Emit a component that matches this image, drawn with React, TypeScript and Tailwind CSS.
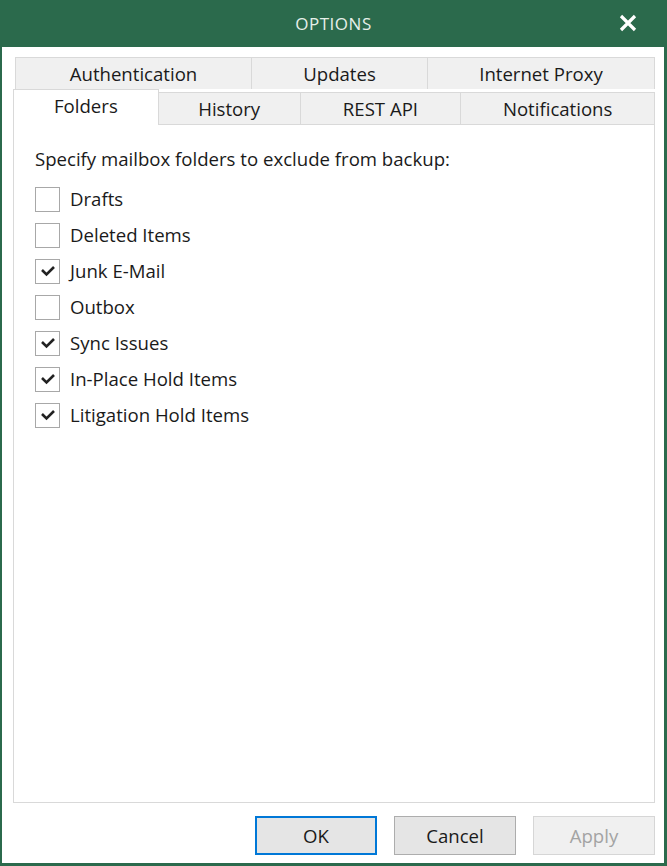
import React from "react";

const topTabs = [
  { label: "Authentication", w: "w-[237px]" },
  { label: "Updates", w: "w-[176px]" },
  { label: "Internet Proxy", w: "w-[227px]" },
];

const bottomTabs = [
  { label: "History", w: "w-[142px]" },
  { label: "REST API", w: "w-[161px]" },
  { label: "Notifications", w: "w-[194px]" },
];

const folders = [
  { label: "Drafts", checked: false },
  { label: "Deleted Items", checked: false },
  { label: "Junk E-Mail", checked: true },
  { label: "Outbox", checked: false },
  { label: "Sync Issues", checked: true },
  { label: "In-Place Hold Items", checked: true },
  { label: "Litigation Hold Items", checked: true },
];

function Check({ checked }: { checked: boolean }) {
  return (
    <div className="w-[25px] h-[25px] border border-[#a8a8a8] bg-white flex items-center justify-center">
      {checked && (
        <svg width="16" height="12" viewBox="0 0 16 12">
          <polyline points="2,5 6.5,9.5 14,2" fill="none" stroke="#222" strokeWidth="2.6" />
        </svg>
      )}
    </div>
  );
}

export default function App() {
  return (
    <div className="w-[667px] h-[866px] flex flex-col bg-[#2b6a4c] font-['Open_Sans',sans-serif] text-[#1a1a1a]">
      <div className="h-[47px] relative flex items-center justify-center">
        <span className="text-[17px] text-[#e6efe9] tracking-[0.5px]">OPTIONS</span>
        <svg className="absolute left-[619px] top-[14px]" width="18" height="18" viewBox="0 0 18 18">
          <path d="M2 2 L16 16 M16 2 L2 16" stroke="#fff" strokeWidth="3.2" />
        </svg>
      </div>
      <div className="flex-1 mx-[2px] mb-[3px] mr-[3px] bg-white flex flex-col pl-[11px] pr-[9px] text-[18.6px]">
        <div className="mt-[10px] ml-[2px] flex h-[32px]">
          {topTabs.map((t, i) => (
            <div
              key={t.label}
              className={`${t.w} h-full bg-[#f0f0f0] border-t border-r border-[#d9d9d9] flex items-center justify-center ${i === 0 ? "border-l" : ""}`}
            >
              {t.label}
            </div>
          ))}
        </div>
        <div className="flex h-[35px] items-end relative z-10">
          <div className="w-[146px] h-[36px] bg-white border-t border-l border-r border-[#d9d9d9] flex items-center justify-center -mb-px pb-[4px]">
            Folders
          </div>
          {bottomTabs.map((t) => (
            <div
              key={t.label}
              className={`${t.w} h-[32px] bg-[#f0f0f0] border-t border-r border-[#d9d9d9] flex items-center justify-center`}
            >
              {t.label}
            </div>
          ))}
        </div>
        <div className="h-[679px] border border-[#d9d9d9] bg-white pl-[21px] pt-[22px]">
          <div className="h-[24px] leading-[24px]">Specify mailbox folders to exclude from backup:</div>
          <div className="mt-[10px] flex flex-col">
            {folders.map((f) => (
              <div key={f.label} className="h-[36px] flex items-center gap-[10px]">
                <Check checked={f.checked} />
                <span>{f.label}</span>
              </div>
            ))}
          </div>
        </div>
        <div className="flex justify-end gap-[17px] mt-[13px]">
          <button className="w-[122px] h-[39px] bg-[#e5e5e5] border-2 border-[#0078d7]">OK</button>
          <button className="w-[122px] h-[39px] bg-[#e5e5e5] border border-[#adadad]">Cancel</button>
          <button className="w-[122px] h-[39px] bg-[#f0f0f0] border border-[#d6d6d6] text-[#a3a3a3]">Apply</button>
        </div>
      </div>
    </div>
  );
}
